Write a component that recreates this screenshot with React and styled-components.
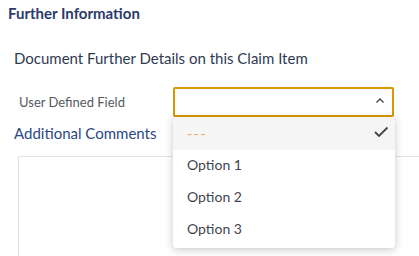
import React from 'react';
import styled, { createGlobalStyle } from 'styled-components';

const GlobalStyle = createGlobalStyle`
  html, body {
    margin: 0;
    padding: 0;
    background: #fff;
    overflow: hidden;
  }
  body {
    font-family: Lato, "Open Sans", sans-serif;
  }
`;

const Page = styled.div`
  width: 419px;
  height: 256px;
  display: flex;
  flex-direction: column;
  padding-top: 4px;
  box-sizing: border-box;
`;

const SectionTitle = styled.h2`
  margin: 0 0 0 8px;
  font-size: 15px;
  line-height: 18px;
  font-weight: 700;
  color: #2a3a6a;
`;

const SubTitle = styled.p`
  margin: 27px 0 0 14px;
  font-size: 15px;
  line-height: 18px;
  color: #2e3a52;
`;

const FieldRow = styled.div`
  display: flex;
  align-items: center;
  margin: 20px 0 0 19px;
`;

const FieldLabel = styled.label`
  width: 154px;
  font-size: 13px;
  color: #555a60;
`;

const SelectWrap = styled.div`
  position: relative;
  width: 221px;
`;

const SelectBox = styled.div`
  height: 30px;
  box-sizing: border-box;
  border: 2px solid #d69a00;
  border-radius: 2px;
  display: flex;
  align-items: center;
  justify-content: flex-end;
  padding: 0 6px 2px 0;
  background: #fff;
`;

const Menu = styled.ul`
  position: absolute;
  top: 30px;
  left: 0;
  width: 222px;
  margin: 0;
  padding: 0 0 2px;
  list-style: none;
  background: #fff;
  border-radius: 0 0 4px 4px;
  box-shadow: 0 2px 8px rgba(0, 0, 0, 0.22);
  z-index: 2;
`;

const MenuItem = styled.li`
  height: ${p => (p.$first ? 33 : 32)}px;
  box-sizing: border-box;
  display: flex;
  align-items: center;
  justify-content: space-between;
  padding: 0 6px 3px 14px;
  font-size: 14px;
  color: #3f4550;
  background: ${p => (p.$selected ? '#f5f5f5' : '#fff')};
`;

const Placeholder = styled.span`
  color: #f0a850;
  letter-spacing: 1.5px;
  padding-top: 2px;
`;

const CommentsTitle = styled.h3`
  margin: 7px 0 0 14px;
  font-size: 15px;
  line-height: 18px;
  font-weight: 400;
  color: #2a4785;
`;

const CommentsBox = styled.div`
  flex: 1;
  margin: 14px 0 0 18px;
  border: 1px solid #e2e2e2;
  border-right: none;
  border-bottom: none;
`;

const ChevronUp = () => (
  <svg width="12" height="12" viewBox="0 0 12 12">
    <polyline points="2.5,7.5 6,4 9.5,7.5" fill="none" stroke="#444" strokeWidth="1.4" />
  </svg>
);

const Check = () => (
  <svg width="16" height="16" viewBox="0 0 16 16">
    <polyline points="2,8 6,12 14.5,3.5" fill="none" stroke="#444" strokeWidth="1.8" />
  </svg>
);

const options = ['Option 1', 'Option 2', 'Option 3'];

export default function App() {
  return (
    <Page>
      <GlobalStyle />
      <SectionTitle>Further Information</SectionTitle>
      <SubTitle>Document Further Details on this Claim Item</SubTitle>
      <FieldRow>
        <FieldLabel>User Defined Field</FieldLabel>
        <SelectWrap>
          <SelectBox>
            <ChevronUp />
          </SelectBox>
          <Menu>
            <MenuItem $first $selected>
              <Placeholder>---</Placeholder>
              <Check />
            </MenuItem>
            {options.map(o => (
              <MenuItem key={o}>{o}</MenuItem>
            ))}
          </Menu>
        </SelectWrap>
      </FieldRow>
      <CommentsTitle>Additional Comments</CommentsTitle>
      <CommentsBox />
    </Page>
  );
}
